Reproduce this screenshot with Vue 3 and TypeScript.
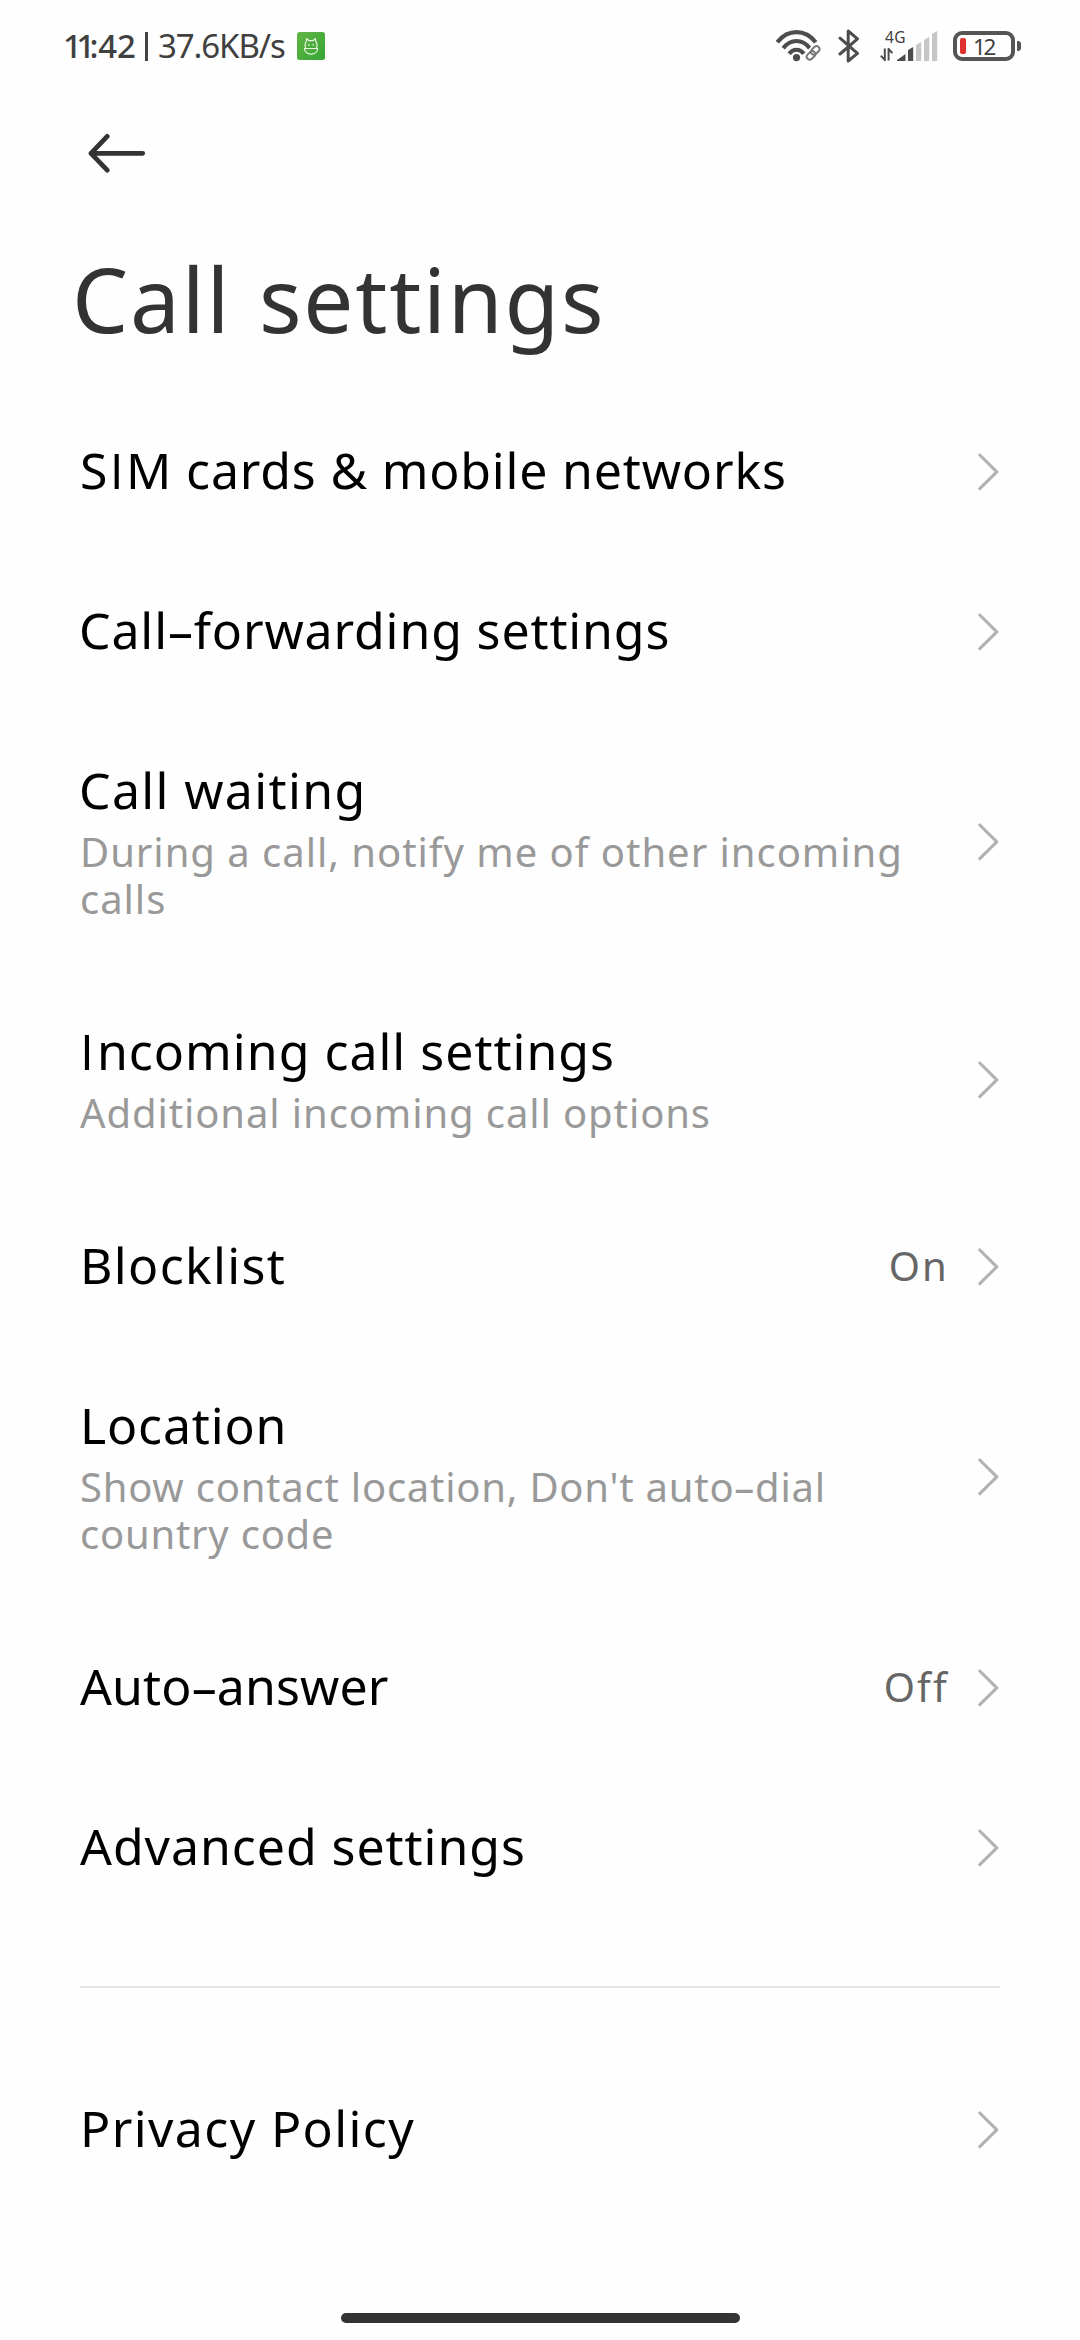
<script setup lang="ts">
interface SettingItem {
  title: string
  tracking: number
  indent?: number
  desc?: string
  descTracking?: number
  value?: string
  valueTracking?: number
}

const items: SettingItem[] = [
  { title: 'SIM cards & mobile networks', tracking: 0.82 },
  { title: 'Call–forwarding settings', tracking: 0.86, indent: -1 },
  {
    title: 'Call waiting',
    tracking: 1.35,
    indent: -1,
    desc: 'During a call, notify me of other incoming\ncalls',
    descTracking: 0.97,
  },
  {
    title: 'Incoming call settings',
    tracking: 1,
    indent: -1,
    desc: 'Additional incoming call options',
    descTracking: 0.9,
  },
  { title: 'Blocklist', tracking: 1.34, value: 'On', valueTracking: 2.2 },
  {
    title: 'Location',
    tracking: 0.83,
    desc: "Show contact location, Don't auto–dial\ncountry code",
    descTracking: 0.76,
  },
  { title: 'Auto–answer', tracking: 0.12, value: 'Off', valueTracking: 2.2 },
  { title: 'Advanced settings', tracking: 0.95 },
]

const footerItems: SettingItem[] = [{ title: 'Privacy Policy', tracking: 1.4 }]

const groups = [items, footerItems]

const splitTitle = (title: string): string[] => title.split(/(I)/).filter(Boolean)

const bars = [
  { x: 0, top: 18, on: true, w: 8.5 },
  { x: 11, top: 12, on: true, w: 5.2 },
  { x: 19, top: 7, on: false, w: 5.2 },
  { x: 27, top: 2, on: false, w: 5.2 },
  { x: 35, top: -4, on: false, w: 5.2 },
]
</script>

<template>
  <div class="screen">
    <header class="status">
      <div class="status-left">
        <span class="clock"><span class="tight">11</span>:42</span>
        <span class="pipe"></span>
        <span class="speed">37.6KB/s</span>
        <svg class="app-icon" width="28" height="28" viewBox="0 0 28 28">
          <defs>
            <linearGradient id="badge" x1="0" y1="0" x2="1" y2="1">
              <stop offset="0" stop-color="#62b546" />
              <stop offset="1" stop-color="#35a634" />
            </linearGradient>
          </defs>
          <rect width="28" height="28" rx="2.5" fill="url(#badge)" />
          <path
            d="M8.6 16.5 C7.6 12.5 8.4 10.5 9.3 9.6 L9.6 6.8 L12 8.6 H16 L18.4 6.8 L18.8 9.6 C20 11 20.4 13.5 19.4 16.5 M7.6 16.5 H20.6 C20.6 20 17.8 22.2 14.1 22.2 C10.4 22.2 7.6 20 7.6 16.5 Z M11 12.8 H12.8 M15.4 12.8 H17.2"
            fill="none"
            stroke="#e9f7e2"
            stroke-width="1.2"
          />
        </svg>
      </div>

      <div class="status-right">
        <svg class="wifi" width="46" height="32" viewBox="0 0 46 32" fill="none">
          <g stroke="#4d4d4d" stroke-width="4.2">
            <path d="M1.3 12.2 C12 -1.2 29 -1.2 39.7 12.2" />
            <path d="M7.3 18.2 C14.6 8.6 26.4 8.6 33.7 18.2" />
            <path d="M13.2 23.8 C17 18.4 24 18.4 27.8 23.8" />
          </g>
          <circle cx="20.5" cy="27.6" r="3.6" fill="#4d4d4d" />
          <g stroke="#fefefe" stroke-width="5">
            <rect x="36.2" y="15.6" width="6" height="9.6" rx="3" transform="rotate(45 39.2 20.4)" />
            <rect x="32" y="20.6" width="6" height="9.6" rx="3" transform="rotate(45 35 25.4)" />
          </g>
          <g stroke="#777" stroke-width="1.9">
            <rect x="36.2" y="15.6" width="6" height="9.6" rx="3" transform="rotate(45 39.2 20.4)" />
            <rect x="32" y="20.6" width="6" height="9.6" rx="3" transform="rotate(45 35 25.4)" />
          </g>
        </svg>

        <svg
          class="bluetooth"
          width="22"
          height="34"
          viewBox="0 0 22 34"
          fill="none"
          stroke="#4d4d4d"
          stroke-width="3"
          stroke-linejoin="round"
          stroke-linecap="round"
        >
          <path d="M2 9.2 L19.5 24.4 L10.2 32 V2 L19.5 9.8 L2 25" />
        </svg>

        <div class="cell">
          <span class="net">4G</span>
          <div class="cell-row">
            <svg width="13" height="13" viewBox="0 0 13 13" fill="none" stroke="#4d4d4d" stroke-width="2">
              <path d="M4.8 0.5 V12 L0.8 7.6" />
              <path d="M8.6 12.5 V1 L12.4 5.2" />
            </svg>
            <svg class="bars" width="40" height="28" viewBox="0 0 40 28" overflow="visible">
              <path
                v-for="b in bars"
                :key="b.x"
                :d="`M${b.x} ${b.top + (b.x ? 3 : 7)} L${b.x + b.w} ${b.top + (b.x ? 0 : 1)} V26 H${b.x} Z`"
                :fill="b.on ? '#4d4d4d' : '#c6c6c6'"
              />
            </svg>
          </div>
        </div>

        <div class="battery">
          <div class="battery-body">
            <span class="charge"></span>
            <span class="percent">12</span>
          </div>
          <span class="nub"></span>
        </div>
      </div>
    </header>

    <nav class="nav">
      <svg
        width="58"
        height="40"
        viewBox="0 0 58 40"
        fill="none"
        stroke="#333"
        stroke-width="4.8"
        stroke-linecap="round"
        stroke-linejoin="round"
      >
        <path d="M54.7 20.3 H3 M19.2 3.4 L3 20.3 L19.2 37.2" />
      </svg>
    </nav>

    <h1 class="heading">Call settings</h1>

    <main>
      <template v-for="(group, g) in groups" :key="g">
        <hr v-if="g > 0" class="divider" />
        <section>
          <div v-for="item in group" :key="item.title" class="row">
            <div class="row-text">
              <div
                class="row-title"
                :style="{ letterSpacing: item.tracking + 'px', textIndent: (item.indent ?? 0) + 'px' }"
              ><span v-for="(part, p) in splitTitle(item.title)" :key="p" :class="{ plain: part === 'I', lead: part === 'I' && p === 0 }">{{ part }}</span></div>
              <div v-if="item.desc" class="row-desc" :style="{ letterSpacing: item.descTracking + 'px' }">{{ item.desc }}</div>
            </div>
            <span v-if="item.value" class="row-value" :style="{ letterSpacing: item.valueTracking + 'px' }">{{ item.value }}</span>
            <svg class="chevron" width="22" height="38" viewBox="0 0 22 38" fill="none">
              <path
                d="M1.8 2 L18.8 18.8 L1.8 35.6"
                stroke="#b2b2b2"
                stroke-width="3.1"
                stroke-linecap="round"
                stroke-linejoin="round"
              />
            </svg>
          </div>
        </section>
      </template>
    </main>

    <div class="home-indicator"></div>
  </div>
</template>

<style>
body {
  margin: 0;
  background: #fefefe;
}
</style>

<style scoped>
.screen {
  display: flex;
  flex-direction: column;
  width: 1080px;
  height: 2340px;
  overflow: hidden;
  box-sizing: border-box;
  background: #fefefe;
  font-family: 'Noto Sans', sans-serif;
  color: #000;
}

.status {
  display: flex;
  justify-content: space-between;
  height: 92px;
  padding: 0 59px 0 63px;
  box-sizing: border-box;
  color: #404040;
  line-height: 44px;
  font-size: 33px;
}

.status-left,
.status-right {
  display: flex;
  align-items: center;
  height: 92px;
}

.clock {
  width: 81px;
  white-space: nowrap;
  font-weight: 500;
  letter-spacing: -0.2px;
}

.tight {
  letter-spacing: -5.6px;
}

.pipe {
  width: 3px;
  height: 29px;
  margin: 1px 10px 0 1px;
  background: #444;
}

.speed {
  width: 129px;
  letter-spacing: -1.09px;
  white-space: nowrap;
}

.app-icon {
  margin: 0 0 0 10px;
}

.wifi {
  margin-right: 16px;
}

.bluetooth {
  margin-right: 20px;
}

.cell {
  width: 57px;
  height: 34px;
  margin-right: 16px;
}

.net {
  display: block;
  height: 20px;
  padding-left: 5px;
  font-size: 15.5px;
  line-height: 16px;
  letter-spacing: 0.4px;
}

.cell-row {
  display: flex;
  align-items: flex-end;
  gap: 4px;
  height: 12px;
}

.bars {
  margin-bottom: -2px;
}

.battery {
  display: flex;
  align-items: center;
  gap: 2px;
}

.battery-body {
  display: flex;
  align-items: center;
  width: 62px;
  height: 30px;
  padding-left: 3px;
  box-sizing: border-box;
  border: 4px solid #555;
  border-radius: 9px;
}

.charge {
  width: 6px;
  height: 16px;
  border-radius: 2px;
  background: #e03131;
}

.percent {
  margin: 1px 0 0 7px;
  font-size: 22.5px;
  line-height: 24px;
  letter-spacing: -2.4px;
}

.nub {
  width: 4px;
  height: 10px;
  border-radius: 0 3px 3px 0;
  background: #555;
}

.nav {
  display: flex;
  height: 122px;
  padding: 41px 0 0 88px;
  box-sizing: border-box;
}

.heading {
  height: 178px;
  margin: 0;
  padding: 25px 0 0 72px;
  box-sizing: border-box;
  color: #333;
  font-size: 89px;
  font-weight: 400;
  line-height: 120px;
  letter-spacing: 1.75px;
  word-spacing: 3px;
  white-space: nowrap;
}

.row {
  display: flex;
  align-items: center;
  padding: 0 80px;
}

.row-text {
  flex: 1;
  padding: 46px 0 49px;
}

.row-title {
  font-size: 50px;
  line-height: 65px;
  white-space: pre;
}

.plain {
  padding: 0 1.5px;
  font-family: 'Open Sans', sans-serif;
  line-height: 1;
}

.lead {
  padding: 0 2px 0 1px;
}

.row-desc {
  margin: 5px 0 2px;
  color: #999;
  font-size: 40px;
  line-height: 47px;
  white-space: pre;
}

.row-value {
  margin: -2px 29px 0 0;
  color: #666;
  font-size: 40px;
  line-height: 48px;
}

.chevron {
  margin-top: -1px;
}

.divider {
  height: 2px;
  margin: 58px 80px 62px;
  border: 0;
  background: #e5e5e5;
}

.home-indicator {
  width: 399px;
  height: 10px;
  margin: auto auto 17px;
  border-radius: 5px;
  background: #333;
}
</style>
